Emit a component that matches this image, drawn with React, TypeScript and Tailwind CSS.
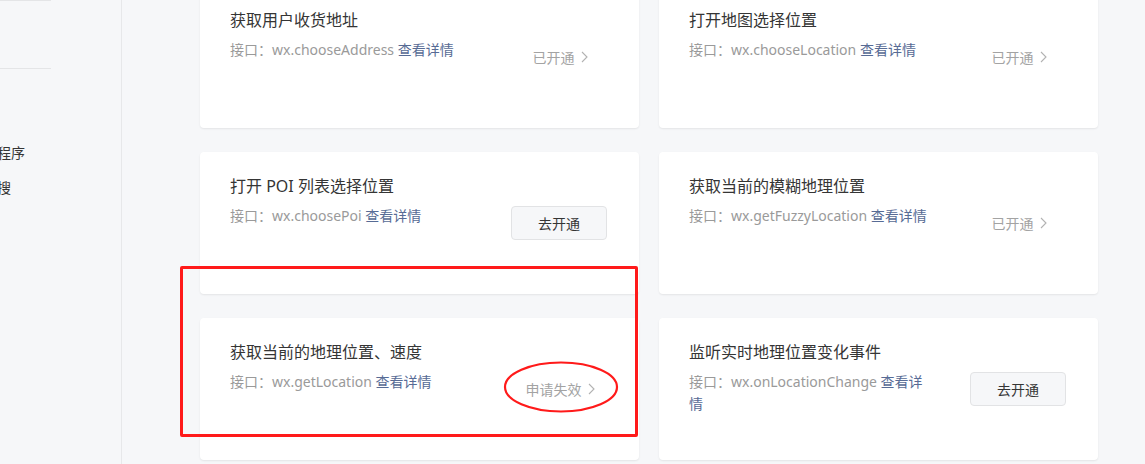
import React from "react";

type Item = {
  title: string;
  api: string;
  status: "on" | "off" | "fail";
};

const items: Item[] = [
  { title: "获取用户收货地址", api: "wx.chooseAddress", status: "on" },
  { title: "打开地图选择位置", api: "wx.chooseLocation", status: "on" },
  { title: "打开 POI 列表选择位置", api: "wx.choosePoi", status: "off" },
  { title: "获取当前的模糊地理位置", api: "wx.getFuzzyLocation", status: "on" },
  { title: "获取当前的地理位置、速度", api: "wx.getLocation", status: "fail" },
  { title: "监听实时地理位置变化事件", api: "wx.onLocationChange", status: "off" },
];

const font = {
  fontFamily: '"Noto Sans", "Noto Sans CJK SC", sans-serif',
};

function Chevron() {
  return (
    <svg width="7" height="12" viewBox="0 0 7 12" className="ml-[6px]" fill="none">
      <path d="M1 1 L6 6 L1 11" stroke="#b2b2b2" strokeWidth="1.1" />
    </svg>
  );
}

function Card({ item }: { item: Item }) {
  return (
    <div className="h-[142px] bg-white rounded-[4px] shadow-[0_1px_2px_rgba(0,0,0,0.08)] flex items-center pl-[30px] pr-[32px]">
      <div className="self-start pt-[22px] w-[240px]">
        <div className="text-[16px] leading-[24px] text-[#353535] whitespace-nowrap">{item.title}</div>
        <div className="mt-[7px] text-[14px] leading-[22px] text-[#9a9a9a]">
          接口：{item.api} <span className="text-[#576b95]">查看详情</span>
        </div>
      </div>
      <div className="ml-auto w-[96px] flex justify-center">
        {item.status === "off" ? (
          <div className="w-[96px] h-[34px] rounded-[4px] border border-[#e2e3e5] bg-[#f6f7f9] text-[14px] text-[#353535] flex items-center justify-center">
            去开通
          </div>
        ) : (
          <div className="flex items-center text-[14px] text-[#a3a3a3] pl-[2px] whitespace-nowrap">
            {item.status === "on" ? "已开通" : "申请失效"}
            <Chevron />
          </div>
        )}
      </div>
    </div>
  );
}

export default function App() {
  return (
    <div className="w-[1145px] h-[464px] overflow-hidden bg-[#f6f7f9] flex relative" style={font}>
      <div className="w-[122px] h-full border-r border-[#e7e8ea] overflow-hidden shrink-0 relative">
        <div className="w-[51px] h-px bg-[#e4e5e7]" />
        <div className="w-[51px] h-px bg-[#e4e5e7] mt-[67px]" />
        <div className="mt-[74px] -ml-[17px] text-[14px] leading-[20px] text-[#353535] whitespace-nowrap">小程序</div>
        <div className="mt-[15px] -ml-[3px] text-[14px] leading-[20px] text-[#353535] whitespace-nowrap">搜</div>
      </div>
      <div className="flex-1 pl-[78px] -mt-[14px]">
        <div className="grid grid-cols-[439px_439px] gap-x-[20px] gap-y-[24px]">
          {items.map((it) => (
            <Card key={it.api} item={it} />
          ))}
        </div>
      </div>
      <div className="absolute left-[180px] top-[266px] w-[458px] h-[171px] border-[3px] border-[#ff1a1a] rounded-[2px] pointer-events-none" />
      <svg className="absolute left-[502px] top-[360px] pointer-events-none" width="118" height="54" viewBox="0 0 118 54">
        <ellipse cx="59" cy="27" rx="56" ry="24.5" fill="none" stroke="#ff1a1a" strokeWidth="2.2" />
      </svg>
    </div>
  );
}
